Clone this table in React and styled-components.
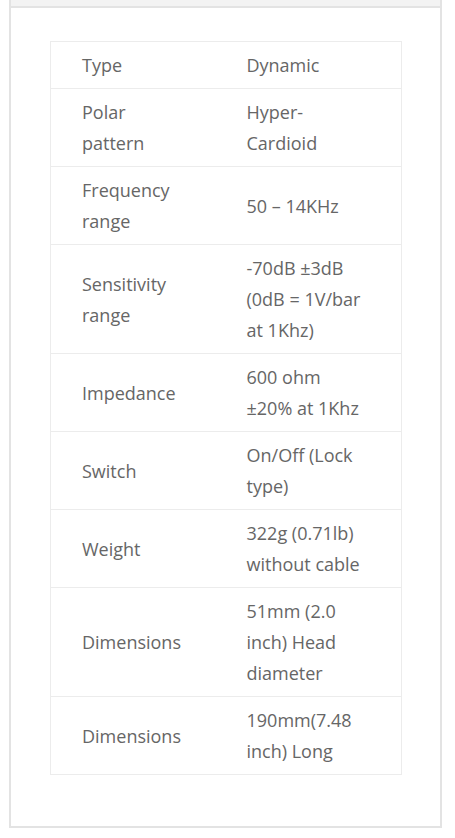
import React from "react";
import styled, { createGlobalStyle } from "styled-components";

const Global = createGlobalStyle`
  html, body { margin: 0; padding: 0; background: #ffffff; }
  body { font-family: "Open Sans", "Noto Sans", sans-serif; }
`;

const Card = styled.div`
  margin: 0 13px 0 9px;
  border: 2px solid #e3e3e3;
  border-top: none;
  background: #fff;
`;

const Strip = styled.div`
  height: 6px;
  background: #f3f3f3;
  border-bottom: 2px solid #e3e3e3;
`;

const Body = styled.div`
  padding: 33px 39px 51px 39px;
`;

const Table = styled.table`
  width: 351px;
  border-collapse: collapse;
  table-layout: fixed;
  border: 1px solid #ececec;
`;

const Cell = styled.td`
  width: ${(p) => p.$w}px;
  box-sizing: border-box;
  padding: 8px ${(p) => p.$pr}px 7px 31px;
  border-top: 1px solid #ececec;
  font-size: 18px;
  line-height: 31px;
  color: #666;
  vertical-align: middle;
  text-align: left;
  word-wrap: break-word;
`;

const rows = [
  ["Type", "Dynamic"],
  ["Polar pattern", "Hyper-Cardioid"],
  ["Frequency range", "50 – 14KHz"],
  ["Sensitivity range", "-70dB ±3dB (0dB = 1V/bar at 1Khz)"],
  ["Impedance", "600 ohm ±20% at 1Khz"],
  ["Switch", "On/Off (Lock type)"],
  ["Weight", "322g (0.71lb) without cable"],
  ["Dimensions", "51mm (2.0 inch) Head diameter"],
  ["Dimensions", "190mm(7.48 inch) Long"],
];

export default function App() {
  return (
    <>
      <Global />
      <Card>
        <Strip />
        <Body>
          <Table>
            <tbody>
              {rows.map(([k, v], i) => (
                <tr key={i}>
                  <Cell $w={165} $pr={27}>{k}</Cell>
                  <Cell $w={186} $pr={33}>{v}</Cell>
                </tr>
              ))}
            </tbody>
          </Table>
        </Body>
      </Card>
    </>
  );
}
